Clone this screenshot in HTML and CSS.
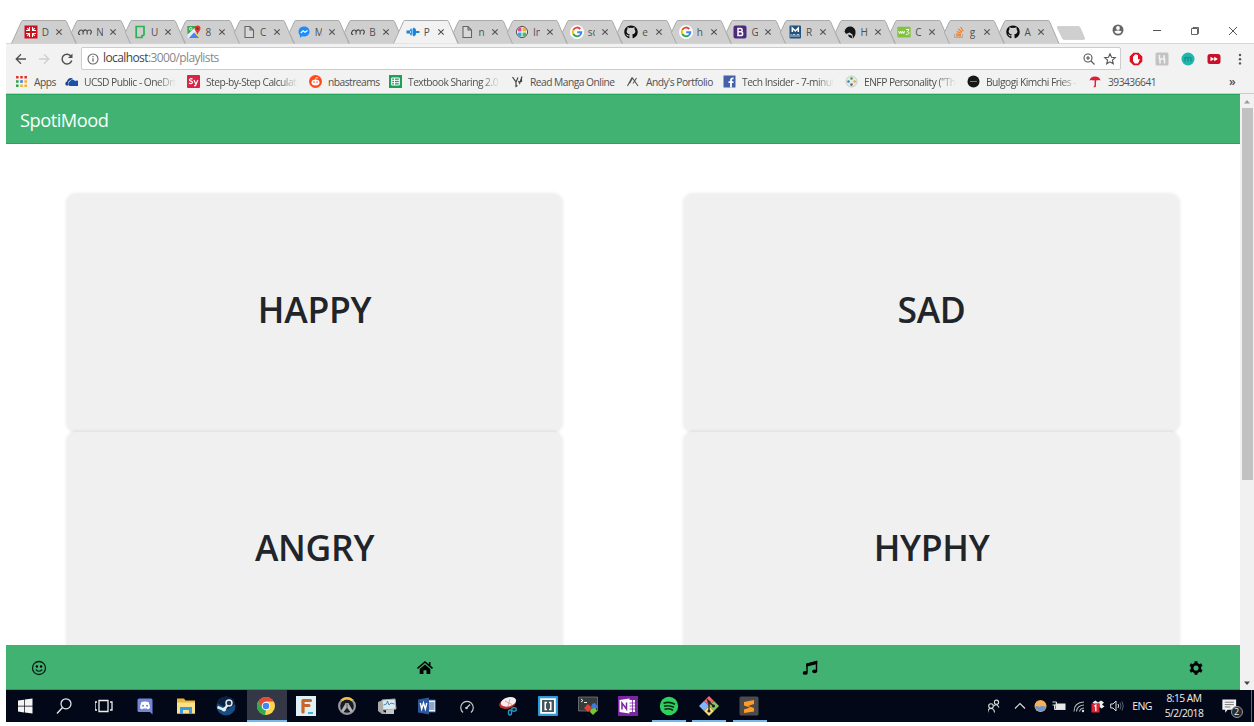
FILE: index.html
```html
<!DOCTYPE html>
<html lang="en">
<head>
<meta charset="utf-8">
<title>SpotiMood</title>
<link rel="stylesheet" href="styles.css">
</head>
<body>
<svg class="defs" aria-hidden="true">
  <symbol id="tab-first" viewBox="0 0 66 24"><path d="M.5 23.5 10.500 1.500Q11 .5 12 .5H54Q55 .5 55.500 1.500L65 23.500"/></symbol>
  <symbol id="tab" viewBox="0 0 66 24"><path d="M10.400 23.500 5.400 12.500 10.500 1.500Q11 .5 12 .5H54Q55 .5 55.500 1.500L65 23.500"/></symbol>
  <symbol id="x" viewBox="0 0 8 8"><path d="M1.300 1.300 6.700 6.700M6.700 1.300 1.300 6.700" stroke="#555" stroke-width="1.200"/></symbol>
  <symbol id="doc" viewBox="0 0 14 14"><path d="M3 1.500H8L11.500 5V12.500H3ZM8 1.500V5H11.500" fill="#d8d8d8" stroke="#666" stroke-width="1.100"/></symbol>
  <symbol id="mm" viewBox="0 0 14 14"><path d="M2.200 9.500Q-.2 9.500 .8 7Q1.500 5 3.500 5Q5.500 5 5 9.500M5 7Q6 4.500 8 5Q9.700 5.500 9 9.500M9 6.500Q10.500 4.300 12.500 5.200Q14.300 6.500 12.200 9.500" fill="none" stroke="#444" stroke-width="1.100"/></symbol>
  <symbol id="google" viewBox="0 0 14 14"><circle cx="7" cy="7" r="7" fill="#fff"/><g fill="none" stroke-width="2"><path d="M10.300 4A4.300 4.300 0 0 0 3.300 4.900" stroke="#ea4335"/><path d="M3.300 4.900A4.300 4.300 0 0 0 3.300 9.100" stroke="#fbbc05"/><path d="M3.300 9.100A4.300 4.300 0 0 0 9.900 10.200" stroke="#34a853"/><path d="M9.900 10.200A4.300 4.300 0 0 0 11.300 7.200H7.200" stroke="#4285f4"/></g></symbol>
  <symbol id="github" viewBox="0 0 16 16"><path fill="#0c0c0c" d="M8 .5C3.500.5.3 3.800.3 8c0 3.500 2.300 6.200 5.300 7.100q.7 0 .6-.6v-1.600c-2.500.5-2.900-1-3.600-2.100l-.8-.6c1.300-.3 1.800.8 2.300 1.300.6.600 1.500.5 2.200.2l.4-.9C3.800 10.300 3 9 3 7.200c0-1 .4-1.800 1-2.400q-.3-1 .1-2.100 1-.1 2.200.8 1.700-.5 3.400 0 1.200-.9 2.200-.8.400 1.100.1 2.100c.6.600 1 1.400 1 2.400 0 1.800-.8 3.100-3.700 3.600q.5.600.5 1.500v2.200q-.1.600.6.600c3-.9 5.300-3.600 5.300-7.100C15.700 3.800 12.500.5 8 .5z"/></symbol>
  <symbol id="teeth" viewBox="0 0 16 16"><path d="M6.500 1.300h3V4h-3zM6.500 12h3v2.700h-3z"/></symbol>
</svg>

<div class="window">
  <header class="tabstrip">
    <ul class="tabs">
      <li class="tab"><svg class="shape"><use href="#tab-first"/></svg><svg class="fav" viewBox="0 0 14 14"><path fill="#cc1020" d="M.5.5h13v13H.5z"/><path d="M5.500 2v3.500H2M8.500 2v3.500H12M5.500 12V8.500H2M8.500 12V8.500H12M3.200 3.200l2 2M10.800 3.200l-2 2M3.200 10.800l2-2M10.800 10.800l-2-2" fill="none" stroke="#fff" stroke-width="1.100"/></svg><span>D</span><svg class="x"><use href="#x"/></svg></li>
      <li class="tab"><svg class="shape"><use href="#tab"/></svg><svg class="fav"><use href="#mm"/></svg><span>N</span><svg class="x"><use href="#x"/></svg></li>
      <li class="tab"><svg class="shape"><use href="#tab"/></svg><svg class="fav" viewBox="0 0 14 14"><path d="M7.500 12.500H3.200V3.500M3.200 3.500V1.500H11V10.500M11 10.500H9V12.500H7" fill="none" stroke="#29b352" stroke-width="1.700"/></svg><span>U</span><svg class="x"><use href="#x"/></svg></li>
      <li class="tab"><svg class="shape"><use href="#tab"/></svg><svg class="fav" viewBox="0 0 14 14"><path fill="#35a853" d="M.5 1h9L1 9z"/><path fill="#fbd34c" d="M8 6l5 7H8z"/><path fill="#e9eef3" d="M9 1 .5 9.500V13h2l7-7z"/><path fill="#35a853" d="M.5 1h9L.5 9.500z"/><path fill="#4285f4" d="M2 13 7 7.500l5 5.500z"/><path fill="#d93a30" d="M10.500.5a3 3 0 0 1 3 3c0 2-2 3-3 6-1-3-3-4-3-6a3 3 0 0 1 3-3z"/><circle cx="10.500" cy="3.500" r="1.100" fill="#7d1d16"/><circle cx="3.700" cy="3.700" r="1.300" fill="none" stroke="#fff" stroke-width=".8"/></svg><span>8</span><svg class="x"><use href="#x"/></svg></li>
      <li class="tab"><svg class="shape"><use href="#tab"/></svg><svg class="fav"><use href="#doc"/></svg><span>C</span><svg class="x"><use href="#x"/></svg></li>
      <li class="tab"><svg class="shape"><use href="#tab"/></svg><svg class="fav" viewBox="0 0 14 14"><path fill="#1b8cff" d="M7 1.500c3.500 0 5.500 2.300 5.500 5s-2 5-5.500 5l-2-.2L3 13v-2.500C.2 7.500 1.500 1.500 7 1.500z"/><path d="m3.800 8 2.300-2.200L8 7.200l2.500-1.700" fill="none" stroke="#fff" stroke-width="1.300"/></svg><span>M</span><svg class="x"><use href="#x"/></svg></li>
      <li class="tab"><svg class="shape"><use href="#tab"/></svg><svg class="fav"><use href="#mm"/></svg><span>B</span><svg class="x"><use href="#x"/></svg></li>
      <li class="tab active"><svg class="shape"><use href="#tab-first"/></svg><svg class="fav" viewBox="0 0 14 14"><path fill="#1787e0" d="m8 2.500 2 2V6H13.500V8H10v1.500l-2 2L5 9V5z"/><path d="M5.500 3.500 4 6H.5M5.500 10.500 4 8H.5M.5 7H4" fill="none" stroke="#1787e0" stroke-width="1.200"/><path d="M6.300 2v10" stroke="#f2f2f2" stroke-width=".7"/></svg><span>P</span><svg class="x"><use href="#x"/></svg></li>
      <li class="tab"><svg class="shape"><use href="#tab"/></svg><svg class="fav"><use href="#doc"/></svg><span>n</span><svg class="x"><use href="#x"/></svg></li>
      <li class="tab"><svg class="shape"><use href="#tab"/></svg><svg class="fav" viewBox="0 0 14 14"><circle cx="7" cy="7" r="5.500" fill="#fff" stroke="#444" stroke-width="1"/><path fill="#e44a9a" d="M3 4l2-1.500h1.500v4H3z"/><path fill="#f0b030" d="M7.500 2.500H9L11 4v2.500H7.500z"/><path fill="#38a7e0" d="M3 7.500h3.500v4H5L3 10z"/><path fill="#4abf5a" d="M7.500 7.500H11V10l-2 1.500H7.500z"/></svg><span>In</span><svg class="x"><use href="#x"/></svg></li>
      <li class="tab"><svg class="shape"><use href="#tab"/></svg><svg class="fav"><use href="#google"/></svg><span>so</span><svg class="x"><use href="#x"/></svg></li>
      <li class="tab"><svg class="shape"><use href="#tab"/></svg><svg class="fav"><use href="#github"/></svg><span>e</span><svg class="x"><use href="#x"/></svg></li>
      <li class="tab"><svg class="shape"><use href="#tab"/></svg><svg class="fav"><use href="#google"/></svg><span>h</span><svg class="x"><use href="#x"/></svg></li>
      <li class="tab"><svg class="shape"><use href="#tab"/></svg><svg class="fav" viewBox="0 0 14 14"><rect x=".5" y=".5" width="13" height="13" rx="2" fill="#4c2a7c"/><path d="M5 3.500h2.500a1.600 1.600 0 0 1 0 3.300H5h2.800a1.800 1.800 0 0 1 0 3.700H5z" fill="none" stroke="#fff" stroke-width="1.500"/></svg><span>G</span><svg class="x"><use href="#x"/></svg></li>
      <li class="tab"><svg class="shape"><use href="#tab"/></svg><svg class="fav" viewBox="0 0 14 14"><rect x="1.500" y=".5" width="11.500" height="13" rx="1" fill="#24527e"/><path d="M4.300 7V3l3 3 3-3V7" fill="none" stroke="#fff" stroke-width="1.500"/><path d="M3 9v3M5 12V9.500h2V12M9 12V9.500h2V12" fill="none" stroke="#c9d9e8" stroke-width=".9"/></svg><span>R</span><svg class="x"><use href="#x"/></svg></li>
      <li class="tab"><svg class="shape"><use href="#tab"/></svg><svg class="fav" viewBox="0 0 14 14"><path fill="#151515" d="M1.500 6.500C2.500 2 6 .8 9 1.800c3.500 1.400 4.300 5.200 3 8.700L10 13.500 9.500 9.500 6.500 7.500 3 9z"/><path fill="#151515" d="M5 9.500l3.500 1 1 3L6 12z"/></svg><span>H</span><svg class="x"><use href="#x"/></svg></li>
      <li class="tab"><svg class="shape"><use href="#tab"/></svg><svg class="fav" viewBox="0 0 14 14"><rect x=".3" y="1.800" width="13.400" height="10.600" rx="1" fill="#83c341"/><path d="M1.700 6.200 2.700 8.500l1-2.300 1 2.300 1-2.300 1 2.300 1-2.300M9 4.500h3L10.500 6.800c2.300 0 2 3.200-1.500 2.500" fill="none" stroke="#fff" stroke-width="1"/></svg><span>C</span><svg class="x"><use href="#x"/></svg></li>
      <li class="tab"><svg class="shape"><use href="#tab"/></svg><svg class="fav" viewBox="0 0 14 14"><path d="M2.500 9v3.500h8V9" fill="none" stroke="#aaa"/><path d="M4 10.800h5M4 8.800l5 .8M4.800 6.500 9.300 8.300M6.300 4l3.800 3.200M8.700 2l2.500 4.300" stroke="#f48024" stroke-width="1.200"/></svg><span>g</span><svg class="x"><use href="#x"/></svg></li>
      <li class="tab"><svg class="shape"><use href="#tab"/></svg><svg class="fav"><use href="#github"/></svg><span>A</span><svg class="x"><use href="#x"/></svg></li>
    </ul>
    <svg class="newtab" viewBox="0 0 30 14"><path d="M2 .5H22Q23.500 .5 24 1.500L28.500 12Q29 13.500 27.500 13.500H8.500Q7 13.500 6.500 12.500L1.500 2Q1 .5 2 .5Z"/></svg>
    <div class="controls">
      <svg viewBox="0 0 14 14"><circle cx="7" cy="7" r="5.500" fill="#666"/><circle cx="7" cy="5" r="1.900" fill="#fff"/><path fill="#fff" d="M3.300 8.400Q7 6.800 10.700 8.400 9.500 10.800 7 10.800T3.300 8.400z"/></svg>
      <svg viewBox="0 0 14 14"><path d="M3 7.500h8" stroke="#555"/></svg>
      <svg viewBox="0 0 14 14"><path d="M3.500 5.500h6v6h-6zM5 5.500V4.500h5.500v6H9.500" fill="none" stroke="#555" stroke-width=".9"/></svg>
      <svg viewBox="0 0 14 14"><path d="m3 4 8 8M11 4l-8 8" stroke="#444" stroke-width=".9"/></svg>
    </div>
  </header>

  <div class="toolbar">
    <svg class="nav" viewBox="0 0 14 14"><path d="M12 7H2.500M7 2.200 2.200 7 7 11.800" fill="none" stroke="#505050" stroke-width="1.300"/></svg>
    <svg class="nav" viewBox="0 0 14 14"><path d="M2 7h9.500M7 2.200 11.800 7 7 11.800" fill="none" stroke="#cfcfcf" stroke-width="1.300"/></svg>
    <svg class="nav" viewBox="0 0 14 14"><path d="M11 4.300A4.900 4.900 0 1 0 11.700 8.500" fill="none" stroke="#505050" stroke-width="1.500"/><path d="M12.500 1.500V6H8z" fill="#505050"/></svg>
    <div class="omnibox">
      <svg viewBox="0 0 14 14"><circle cx="7" cy="7" r="5" fill="none" stroke="#666" stroke-width="1.100"/><path d="M7 6.200V9.800M7 4v1.200" stroke="#666" stroke-width="1.200"/></svg>
      <p class="url">localhost<span>:3000/playlists</span></p>
      <svg viewBox="0 0 14 14"><circle cx="6" cy="6" r="4" fill="none" stroke="#555" stroke-width="1.100"/><path d="m9 9 3.500 3.500M4 6h4M6 4v4" stroke="#555" stroke-width="1.100"/></svg>
      <svg viewBox="0 0 14 14"><path d="m7 1.800 1.500 3.500 3.800.3-2.900 2.500.9 3.700L7 9.800l-3.300 2 .9-3.700-2.900-2.500 3.800-.3z" fill="none" stroke="#555" stroke-width="1.100"/></svg>
    </div>
    <div class="extensions">
      <svg viewBox="0 0 14 14"><path fill="#e01020" d="M4.500 .7h5L13.300 4.500v5L9.500 13.300h-5L.7 9.500v-5z"/><path fill="#fff" d="M4 6.500V4.200h1V3h1.200v-.8h1.500V3H9v5l.9-1.300 1 .5L9 11.500H5.800L4 9z"/></svg>
      <svg viewBox="0 0 14 14"><rect x=".5" y=".5" width="13" height="13" rx="1.500" fill="#c3c3c3"/><path d="M4.500 3v4h5v4.500M5 6.500v5M9 6.500V4h1" fill="none" stroke="#f4f4f4" stroke-width="1.500"/></svg>
      <svg viewBox="0 0 14 14"><circle cx="7" cy="7" r="6.500" fill="#20b5ad"/><path d="M4 9.500V5M4 6q1.500-1.600 3 0v3.500M7 6q1.500-1.600 3 0v3.500" fill="none" stroke="#12807f" stroke-width=".9"/></svg>
      <svg viewBox="0 0 14 14"><rect x=".5" y="2" width="13" height="10" rx="2.500" fill="#c8102a"/><path d="m3.500 4.700 3.700 2.300-3.700 2.300zM7.200 4.700l3.700 2.300-3.700 2.300z" fill="#fff"/></svg>
      <svg viewBox="0 0 14 14"><g fill="#555"><circle cx="7" cy="3" r="1.200"/><circle cx="7" cy="7.200" r="1.200"/><circle cx="7" cy="11.400" r="1.200"/></g></svg>
    </div>
  </div>

  <nav class="bookmarks">
    <a class="mark apps"><svg viewBox="0 0 13 13"><path fill="#e0372c" d="M1 1h2.600v2.600H1zM5.200 1h2.600v2.600H5.200zM9.400 1H12v2.600H9.400z"/><path fill="#2da44f" d="M1 5.200h2.600v2.600H1zM1 9.400h2.600V12H1z"/><path fill="#3b7de0" d="M5.200 5.200h2.600v2.600H5.200z"/><path fill="#f3b32a" d="M9.400 5.200H12v2.600H9.400zM5.200 9.400h2.600V12H5.200zM9.400 9.400H12V12H9.400z"/></svg><span>Apps</span></a>
    <a class="mark fade"><svg viewBox="0 0 13 13"><path fill="#1553ad" d="M4.500 11a2.500 2.500 0 0 1 .3-4.500A3 3 0 0 1 10 6a2.500 2.500 0 0 1 3 5z"/><path fill="#1a3f8c" d="M3.500 10.500H1.500C-.5 9.500.3 6.700 2 6.500 2.500 3 6.500 2 8.200 4.200 6.500 4 5 4.800 4.300 6 2.500 6.800 2.500 9 3.500 10.500z"/></svg><span>UCSD Public - OneDrive</span></a>
    <a class="mark fade"><svg viewBox="0 0 13 13"><rect width="13" height="13" rx="1" fill="#db2346"/><path d="M5.500 4.200C4.500 3.300 2.300 3.600 2.500 5s3 .8 3 2.300S3 9 2 8M7 5l1.700 4M10.800 5 8.500 10.700H7" fill="none" stroke="#fff" stroke-width="1.200"/></svg><span>Step-by-Step Calculator</span></a>
    <a class="mark"><svg viewBox="0 0 13 13"><circle cx="6.500" cy="6.500" r="6.500" fill="#ff4a1c"/><ellipse cx="6.500" cy="7.500" rx="4" ry="2.900" fill="#fff"/><circle cx="5" cy="7" r=".8" fill="#ff4a1c"/><circle cx="8" cy="7" r=".8" fill="#ff4a1c"/><path d="m6.500 4.500.7-2 2 .5" fill="none" stroke="#fff" stroke-width=".8"/></svg><span>nbastreams</span></a>
    <a class="mark fade"><svg viewBox="0 0 13 13"><path fill="#1ea05a" d="M0 0h13v13H0z"/><path d="M2.700 3h7.600v7H2.700zM2.700 5.300h7.600M2.700 7.700h7.600M5.500 3v7" fill="none" stroke="#fff"/></svg><span>Textbook Sharing 2.0</span></a>
    <a class="mark"><svg viewBox="0 0 13 13"><path d="M1.500 2 5 7l2-4.500M5 7v4.500l1.500-1M7.500 6l1.200 2.200L11 1.500M10.500 4v3" fill="none" stroke="#444" stroke-width="1.200"/></svg><span>Read Manga Online</span></a>
    <a class="mark"><svg viewBox="0 0 13 13"><path d="M.5 11 5 2.500M2.500 8.500 5.500 3l5.500 8M6 8.500 9.500 3" fill="none" stroke="#555" stroke-width="1.100"/></svg><span>Andy's Portfolio</span></a>
    <a class="mark fade"><svg viewBox="0 0 13 13"><path fill="#4360a8" d="M.5.500h12v12H.5z"/><path d="M8 12.500V5q0-1.800 2.500-1.500M5.500 7.200h5" fill="none" stroke="#fff" stroke-width="1.800"/></svg><span>Tech Insider - 7-minute</span></a>
    <a class="mark fade"><svg viewBox="0 0 13 13"><circle cx="6.500" cy="6.500" r="5.500" fill="#e6ebe6" stroke="#b8c4bb" stroke-width=".8"/><circle cx="6.500" cy="3.500" r="1.300" fill="#4a9a55"/><circle cx="9.600" cy="6.500" r="1.300" fill="#d0b83e"/><circle cx="6.500" cy="9.600" r="1.300" fill="#7b5a8c"/><circle cx="3.500" cy="6.500" r="1.300" fill="#328aa2"/></svg><span>ENFP Personality ("The</span></a>
    <a class="mark fade"><svg viewBox="0 0 13 13"><circle cx="6.500" cy="6.500" r="6" fill="#171717"/><path d="M3 6.500h7" stroke="#888" stroke-width=".9"/></svg><span>Bulgogi Kimchi Fries - T</span></a>
    <a class="mark"><svg viewBox="0 0 13 13"><path fill="#e21b34" d="M.5 5.500Q1.500 1.500 6 1.500T11.500 5.500Q9.800 4.500 8 5.500 6 4.500 4.300 5.500 2.500 4.500 .5 5.500z"/><path d="M6.300 4.500v6q0 1.300-1.500 1" fill="none" stroke="#e21b34" stroke-width="1.400"/></svg><span>393436641</span></a>
    <span class="more">»</span>
  </nav>

  <div class="viewport">
    <div class="page">
      <header class="brand">SpotiMood</header>
      <main class="moods">
        <section class="card"><h1>HAPPY</h1></section>
        <section class="card"><h1>SAD</h1></section>
        <section class="card"><h1>ANGRY</h1></section>
        <section class="card"><h1>HYPHY</h1></section>
      </main>
      <footer class="bottomnav">
        <svg viewBox="0 0 16 16"><circle cx="8" cy="8" r="6.500" fill="none" stroke="#0b1d13" stroke-width="1.300"/><circle cx="5.900" cy="6.500" r="1.200"/><circle cx="10.100" cy="6.500" r="1.200"/><path d="M4.800 9.500Q8 13 11.200 9.500" fill="none" stroke="#0b1d13" stroke-width="1.200"/></svg>
        <svg viewBox="0 0 16 16"><path d="M.5 8.300 8 2l7.500 6.300M12.700 2v4" fill="none" stroke="#000" stroke-width="1.600"/><path d="M2.700 9 8 4.600 13.300 9v5H9.500v-3.700h-3V14H2.700z"/></svg>
        <svg viewBox="0 0 16 16"><path d="M5 12.500V4.300L14.500 1.500V11" fill="none" stroke="#000" stroke-width="1.400"/><path d="M4.300 3.500 15.200 1v3L4.300 6.700z"/><ellipse cx="3.200" cy="12.900" rx="2.500" ry="1.900"/><ellipse cx="12.600" cy="11.300" rx="2.500" ry="1.900"/></svg>
        <svg viewBox="0 0 16 16"><circle cx="8" cy="8" r="3.900" fill="none" stroke="#000" stroke-width="2.700"/><use href="#teeth" width="16" height="16"/><use href="#teeth" width="16" height="16" transform="rotate(60 8 8)"/><use href="#teeth" width="16" height="16" transform="rotate(120 8 8)"/></svg>
      </footer>
    </div>
    <div class="scrollbar">
      <svg viewBox="0 0 14 14"><path d="M4 9.500 7 6l3 3.500z" fill="#999"/></svg>
      <div class="thumb"></div>
      <svg viewBox="0 0 14 14"><path d="M4 5.500h6L7 9z" fill="#444"/></svg>
    </div>
  </div>

  <div class="taskbar">
    <div class="launchers">
      <i><svg viewBox="0 0 20 20"><path fill="#f4f4f4" d="M3 4.500l6-.8v6H3zM9.700 3.600 17.500 2.500v7.200H9.700zM3 10.400h6v6l-6-.9zM9.700 10.400h7.800v7.200l-7.800-1z"/></svg></i>
      <i><svg viewBox="1 0 20 20"><circle cx="12" cy="7.800" r="5" fill="none" stroke="#eee" stroke-width="1.200"/><path d="m8.500 11.500-5.500 6" stroke="#eee" stroke-width="1.300"/></svg></i>
      <i><svg viewBox="2 0 20 20"><path d="M6 4.500h9v11H6zM4 6H2v8h2M17 6h2v8h-2" fill="none" stroke="#eee" stroke-width="1.300"/></svg></i>
      <i><svg viewBox="0 0 20 20"><path fill="#7187d6" d="M4 2.500h12q1.500 0 1.500 1.500v14.500L15 16H4q-1.500 0-1.500-1.500V4Q2.500 2.500 4 2.500z"/><path fill="#fff" d="M6.500 6Q10 5 13.500 6q1.500 3 1.500 6-1.200 1.200-2.500 1.300L12 12.500H8l-.5.8Q6 13.200 5 12 5 9 6.500 6z"/><circle cx="8" cy="9.800" r="1" fill="#7187d6"/><circle cx="12" cy="9.800" r="1" fill="#7187d6"/></svg></i>
      <i><svg viewBox="0 0 20 20"><path fill="#e9b83b" d="M1 2.500h7l1.500 2H19v13H1z"/><path fill="#fbe18a" d="M1 6.500h18v11H1z"/><path fill="#3b9cdd" d="M4 11h12V18h-3V14H7v4H4z"/></svg></i>
      <i><svg viewBox="0 0 20 20"><circle cx="10" cy="10" r="9.500" fill="#174c82"/><path fill="#0c203e" d="M1 7A9.500 9.500 0 0 1 19.300 8L12 13z"/><path d="m1.500 11 6.500 2.800 4-5.500" fill="none" stroke="#e6edf4" stroke-width="2.500"/><circle cx="13" cy="7" r="3" fill="#173458" stroke="#e6edf4" stroke-width="1.400"/><circle cx="8" cy="13.500" r="2" fill="#e6edf4"/></svg></i>
      <i class="focused"><svg viewBox="0 0 20 20"><circle cx="10" cy="10" r="9" fill="#fdd34c"/><path fill="#e04b3b" d="M2.200 5.500A9 9 0 0 1 17.800 5.500H10L6 12z"/><path fill="#34a853" d="M2.200 5.500 6.500 12 10 14l-1 5A9 9 0 0 1 2.200 5.500z"/><circle cx="10" cy="10" r="4.300" fill="#fff"/><circle cx="10" cy="10" r="3.300" fill="#4285f4"/></svg></i>
      <i><svg viewBox="0 0 20 20"><path fill="#dff1f7" d="M0 0h20v20H0z"/><path d="M7 16V4.500h7.500M7 9.500h6" fill="none" stroke="#c96526" stroke-width="3.200" stroke-linecap="round" stroke-linejoin="round"/><path d="M12 17h5" stroke="#41b4d6" stroke-width="2"/></svg></i>
      <i><svg viewBox="0 0 20 20"><circle cx="10" cy="10" r="7.900" fill="#181b24" stroke="#96999e" stroke-width="2.200"/><path d="M4.500 4.500A7.600 7.600 0 0 1 15.500 4.500" fill="none" stroke="#efc33d" stroke-width="2.500"/><path d="m4.500 15 4.700-8v5L6 16M15.500 15l-4.700-8v5l3.200 4" fill="#bbb" stroke="#aaa"/></svg></i>
      <i><svg viewBox="0 0 20 20"><path fill="#aaa" d="m1 6 5-2v11l5 3H5l-4-3z"/><path fill="#dce9ef" stroke="#aaa" d="m5 4 13-1 1 10-13 1z"/><path d="m6.500 9 3-1 1-3 1.500 4 2-2 3.500 1" fill="none" stroke="#3c8db5"/><path fill="#c7c7c7" d="m9 14 8-1v5H9z"/></svg></i>
      <i><svg viewBox="0 0 20 20"><path fill="#f2f6fb" stroke="#2b579a" d="M11 4h7.500v12H11z"/><path d="M12 7h5.500M12 9h5.500M12 11h5.500M12 13h5.500" stroke="#2b579a"/><path fill="#2b579a" d="m1 3.500 11-2v17L1 16.500z"/><path d="m3.300 7 1.400 6 1.800-6 1.800 6L9.800 7" fill="none" stroke="#fff" stroke-width="1.400"/></svg></i>
      <i><svg viewBox="0 0 20 20"><path d="M6 16.500A6.300 6.300 0 1 1 14 16.500M9.500 12 13 8.500" fill="none" stroke="#ccc" stroke-width="1.200"/><circle cx="9.500" cy="12" r="1.300" fill="#ccc"/></svg></i>
      <i><svg viewBox="0 0 20 20"><ellipse cx="9.500" cy="7.500" rx="8.500" ry="5" fill="#ba3030" transform="rotate(-15 10 7.500)"/><ellipse cx="10.500" cy="6" rx="7.800" ry="4.500" fill="#f4efee" transform="rotate(-15 10 6)"/><path d="m7 5 7 3.500M12 3l-2 7" stroke="#d88" stroke-width=".8"/><g fill="none" stroke="#2b91b8" stroke-width="1.400"><ellipse cx="12" cy="16.500" rx="1.600" ry="2.500"/><ellipse cx="16" cy="13.500" rx="2.300" ry="1.700"/></g></svg></i>
      <i><svg viewBox="0 0 20 20"><rect x="1" y="1" width="18" height="18" rx="1" fill="#fff" stroke="#2d9bd8" stroke-width="2.400"/><path fill="#46545b" d="M4 4h12v12H4z"/><path d="M9 6.500H7.200v7H9M11 6.500h1.800v7H11" fill="none" stroke="#fff" stroke-width="1.500"/></svg></i>
      <i><svg viewBox="0 0 20 20"><path fill="#383b3c" stroke="#777" stroke-width=".8" d="M.5 1h19v14H.5z"/><path d="m3 3 2 1.500-2 1.500M6 6.500h3" fill="none" stroke="#eee"/><path fill="#e64031" d="m10 8-4 4 4 4 4-4z"/><path fill="#3f79df" d="m14 8 3-1 3 4-4 3-3-3z"/><path fill="#6eca35" d="m13 13 4-1 2 3-4 4-3-3z"/></svg></i>
      <i><svg viewBox="0 0 20 20"><path fill="#7b25a5" d="M0 0h20v20H0z"/><path fill="#fff" d="M10 4h7v12h-7z"/><path d="M11 7h7M11 10h7M11 13h7M14.500 4v12" stroke="#7b25a5" stroke-width=".8"/><path fill="#fff" d="m1.500 4 10-1.500v15L1.500 16z"/><path d="M4 13.500V7l4.500 6V6.500" fill="none" stroke="#7b25a5" stroke-width="1.500"/></svg></i>
      <i class="running"><svg viewBox="0 0 20 20"><circle cx="10" cy="10" r="9.200" fill="#2ed15f"/><path d="M4.500 7.200q6-2 11.500 1M5 10.300q5-1.600 10 1M5.500 13.300q4.500-1.300 8.500.9" fill="none" stroke="#0b2913" stroke-width="1.600"/></svg></i>
      <i class="running"><svg viewBox="0 0 20 20"><path fill="#ee6a73" d="m10 0 5 5-5 5-5-5z"/><path fill="#80b6fb" d="m5 5 5 5-5 5-5-5z"/><path fill="#86c65a" d="m15 5 5 5-5 5-5-5z"/><path fill="#fbdc78" d="m10 10 5 5-5 5-5-5z"/><path d="M8 3l2 3v10M10 6l4.500 4" fill="none" stroke="#222" stroke-width="1.300"/><g fill="#222"><circle cx="10" cy="6" r="1.600"/><circle cx="14.500" cy="10" r="1.600"/><circle cx="10" cy="15" r="1.600"/></g></svg></i>
      <i class="running"><svg viewBox="0 0 20 20"><rect x=".5" y=".5" width="19" height="19" rx="1.500" fill="#4b4b4b"/><path d="M15 4v4l-6 2 6 2v3.500L5 17v-3.500l6-2-6-2V6z" fill="#ff9b26"/></svg></i>
    </div>
    <div class="tray">
      <svg viewBox="2 0 14 14"><g fill="none" stroke="#ddd" stroke-width="1.100"><circle cx="5" cy="7" r="2.300"/><path d="M1.800 13.500q0-4 3.200-4t3.500 4"/><circle cx="10.500" cy="3.200" r="2.100"/><path d="M8 7Q10.500 3.700 13 8.500"/></g></svg>
      <svg viewBox="0 0 14 14"><path d="m2 9.500 5-5 5 5" fill="none" stroke="#ddd" stroke-width="1.200"/></svg>
      <svg viewBox="0 0 14 14"><circle cx="7.500" cy="7" r="6" fill="#f2b25b"/><path fill="#7095cb" d="M2 8q2-2 4 0 4-2 7.300.5A6 6 0 0 1 2 8z"/></svg>
      <svg viewBox="0 0 14 14"><path fill="#e8e8e8" d="M3.500 4.500h10v6.500H3.500z"/><path d="M.5 3h4v3h-4M2.500 6v4.500h10" fill="none" stroke="#ddd"/></svg>
      <svg viewBox="0 0 14 14"><g fill="none" stroke="#bbb" stroke-width="1.100"><path d="M2 12.500Q2 3.500 12 3M4.500 12.500Q5 6.500 12 6M7.500 12.500Q8 9.500 12 9"/></g><circle cx="11" cy="12" r="1.200" fill="#ddd"/></svg>
      <svg viewBox="0 0 14 14"><path fill="#eee" d="m4.500 1.500 2.500 2 3-2 3 2L11 5.500l2.500 2-3 2-2-1.500V4.500L3 5 1.500 3.500z"/><path fill="#da2536" d="M.5 4.500h8v9h-8z"/><path d="m3.200 7.200 1.600-1v6" fill="none" stroke="#fff" stroke-width="1.300"/></svg>
      <svg viewBox="0 0 14 14"><path d="M.7 5H3l3-3v10L3 9H.7z" fill="none" stroke="#ddd"/><path d="M8 5q1.300 2 0 4" fill="none" stroke="#ddd"/><path d="M10 3.500q2 3.500 0 7M12 2.500q2.500 4.500 0 9" fill="none" stroke="#566071"/></svg>
      <span class="lang">ENG</span>
      <div class="clock"><span>8:15 AM</span><span>5/2/2018</span></div>
      <div class="notice"><svg viewBox="0 0 20 20"><path fill="#f2f2f2" d="M2.500 2.500H17v11H8L5.500 16.500v-3h-3z"/><path d="M5 5.500h9.500M5 8h9.500M5 10.500h6" stroke="#555" stroke-width=".8"/></svg><b>2</b></div>
    </div>
  </div>
</div>
</body>
</html>
```
FILE: styles.css
```css
* { box-sizing: border-box; }
body {
  margin: 0;
  height: 726px;
  overflow: hidden;
  background: #fff;
  font-family: "Open Sans", "Noto Sans", sans-serif;
  color: #505050;
}
svg { display: block; flex: none; }
.defs { position: absolute; width: 0; height: 0; }
.window { width: 1248px; height: 722px; margin-left: 6px; padding-top: 20px; display: flex; flex-direction: column; }

/* Tab strip */
.tabstrip { height: 23px; flex: none; display: flex; }
.tabs { display: flex; list-style: none; margin: 0; padding: 0 0 0 5px; }
.tab {
  position: relative;
  width: 54.600px;
  height: 24px;
  display: grid;
  grid-template-columns: 14px 9px 8px;
  column-gap: 4px;
  align-items: center;
  padding-left: 12.700px;
  font-size: 10px;
}
.tab > * { position: relative; }
.tab .shape { position: absolute; left: 0; top: 0; width: 66px; height: 24px; fill: #cfcfcf; stroke: #aaa; stroke-width: 1; }
.tab.active .shape { fill: #f2f2f2; }
.tab span { overflow: hidden; white-space: nowrap; width: 7px; line-height: 16px; }
.fav { width: 14px; height: 14px; }
.x { width: 8px; height: 8px; }
.newtab { width: 30px; height: 14px; margin: 6px 0 0 8px; fill: #cfcfcf; stroke: #c4c4c4; stroke-width: .6; }
.controls { display: grid; grid-template-columns: 41px 38px 38px 38px; justify-items: center; margin: 3px 2px 0 auto; }
.controls svg { width: 14px; height: 14px; }

/* Toolbar */
.toolbar { height: 27px; flex: none; display: flex; align-items: center; padding: 3px 0 0 8px; background: #f2f2f2; border-top: 1px solid #d8d8d8; }
.nav { width: 14px; height: 14px; margin-right: 9px; }
.omnibox { width: 1040px; height: 23px; margin-left: -2px; display: flex; align-items: center; gap: 7px; padding: 0 3px 0 4px; background: #fff; border: 1px solid #ccc; border-radius: 2px; }
.omnibox svg { width: 14px; height: 14px; }
.url { flex: 1; margin: -2px 0 0 -4px; font-size: 12px; letter-spacing: -.6px; color: #444; }
.url span { color: #888; }
.extensions { display: flex; gap: 12px; margin-left: 8px; }
.extensions svg { width: 14px; height: 14px; }

/* Bookmarks */
.bookmarks {
  position: relative;
  height: 24px;
  flex: none;
  display: grid;
  grid-template-columns: 50px 122px 122px 80px 122px 116px 96px 122px 122px 122px 140px 20px;
  align-items: center;
  padding-left: 9px;
  background: #f2f2f2;
  border-bottom: 1px solid #ccc;
  font-size: 10.250px;
  letter-spacing: -.52px;
}
.mark { display: flex; align-items: center; gap: 6px; white-space: nowrap; }
.mark svg { width: 13px; height: 13px; }
.fade span { width: 92px; overflow: hidden; mask-image: linear-gradient(to right, #000 80%, transparent); }
.more { font-size: 12px; font-weight: 600; }

/* Web page */
.viewport { height: 596px; flex: none; display: flex; }
.page { width: 1234px; display: flex; flex-direction: column; }
.brand { height: 50px; flex: none; padding-left: 14px; line-height: 50px; font-size: 18.250px; letter-spacing: -.5px; color: #f7fffa; background: #42b272; border: solid #25a45b; border-width: 1px 0; }
.moods { height: 501px; flex: none; overflow: hidden; padding-top: 50px; display: grid; grid-template-columns: 617px 617px; grid-auto-rows: 238px; }
.card { margin: 0 61px; background: #f0f0f0; border-radius: 9px; box-shadow: 0 0 4px rgba(0, 0, 0, .12); display: flex; align-items: center; justify-content: center; }
.card h1 { margin: 0 0 8px; font-size: 35.500px; line-height: 42px; font-weight: 560; letter-spacing: -.3px; color: #212529; }
.bottomnav { height: 45px; flex: none; display: flex; align-items: center; justify-content: space-between; padding: 1px 36px 0 25px; background: #42b272; border: solid #2b9459; border-width: 0 0 1px; }
.bottomnav svg { width: 16px; height: 16px; }
.scrollbar { width: 14px; background: #f1f1f1; display: flex; flex-direction: column; align-items: center; }
.scrollbar svg { width: 14px; height: 14px; }
.thumb { width: 11px; height: 372px; margin-bottom: auto; background: #c1c1c1; }

/* Taskbar */
.taskbar { height: 32px; flex: none; display: flex; justify-content: space-between; background: #020817; color: #f0f0f0; }
.launchers { display: grid; grid-template-columns: repeat(19, 40.250px); margin-left: -1px; }
.launchers i { display: flex; align-items: center; justify-content: center; }
.launchers svg { width: 20px; height: 20px; margin-right: 1px; margin-bottom: 1px; }
.focused { background: linear-gradient(#77b7ea, #77b7ea) bottom / 100% 2px no-repeat #343846; }
.running { background: linear-gradient(#77b7ea, #77b7ea) bottom / 34px 2px no-repeat; }
.tray { display: grid; grid-template-columns: 31px 20px 19px 20px 19px 19px 20px 30px 54px 40px; align-items: center; justify-items: center; border-right: 1px solid #667; margin-right: 2px; }
.tray > svg { width: 14px; height: 14px; }
.lang { font-size: 10.500px; letter-spacing: -.6px; }
.clock { display: flex; flex-direction: column; align-items: center; font-size: 10.250px; line-height: 15px; letter-spacing: -.5px; }
.notice { position: relative; margin-right: 4px; }
.notice svg { width: 19px; height: 19px; }
.notice b { position: absolute; right: -4px; bottom: -2px; width: 12px; height: 12px; border: 1px solid #999; border-radius: 50%; background: #252a34; font-size: 9px; line-height: 10px; text-align: center; font-weight: 400; }
```
